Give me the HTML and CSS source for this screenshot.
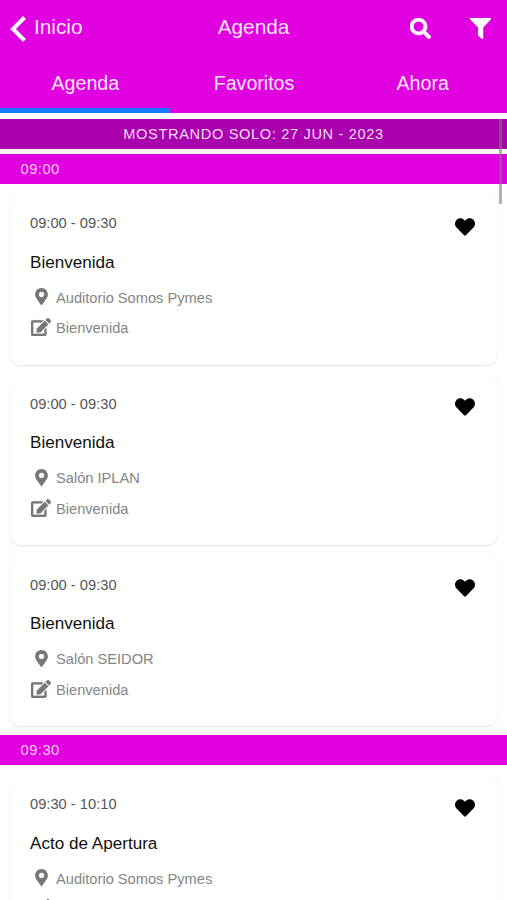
FILE: index.html
```
<!DOCTYPE html>
<html lang="es">
<head>
    <meta charset="UTF-8">
    <meta name="viewport" content="width=device-width, initial-scale=1.0">
    <title>Agenda</title>
    <link rel="stylesheet" href="styles.css">
</head>
<body>
    <!-- Icons -->
    <svg class="sprite" aria-hidden="true">
        <symbol id="heart" viewBox="0 0 512 512"><path d="M462.3 62.6C407.5 15.9 326 24.3 275.7 76.2L256 96.5l-19.7-20.3C186.1 24.3 104.5 15.9 49.7 62.6c-62.8 53.6-66.1 149.8-9.9 207.9l193.5 199.8c12.5 12.9 32.8 12.9 45.3 0l193.5-199.8c56.3-58.1 53-154.3-9.8-207.9z"/></symbol>
        <symbol id="pin" viewBox="0 0 384 512"><path d="M172.268 501.67C26.97 291.031 0 269.413 0 192 0 85.961 85.961 0 192 0s192 85.961 192 192c0 77.413-26.97 99.031-172.268 309.67-9.535 13.774-29.93 13.773-39.464 0zM192 272c44.183 0 80-35.817 80-80s-35.817-80-80-80-80 35.817-80 80 35.817 80 80 80z"/></symbol>
        <symbol id="edit" viewBox="0 0 576 512"><path d="M402.6 83.2l90.2 90.2c3.8 3.8 3.8 10 0 13.8L274.4 405.6l-92.8 10.3c-12.4 1.4-22.9-9.1-21.5-21.5l10.3-92.8L388.8 83.2c3.8-3.8 10-3.8 13.8 0zm162-22.9l-48.8-48.8c-15.2-15.2-39.9-15.2-55.2 0l-35.4 35.4c-3.8 3.8-3.8 10 0 13.8l90.2 90.2c3.8 3.8 10 3.8 13.8 0l35.4-35.4c15.2-15.3 15.2-40 0-55.2zM384 346.2V448H64V128h229.8c3.2 0 6.2-1.3 8.5-3.5l40-40c7.6-7.6 2.2-20.5-8.5-20.5H48C21.5 64 0 85.5 0 112v352c0 26.5 21.5 48 48 48h352c26.5 0 48-21.5 48-48V306.2c0-10.7-12.9-16-20.5-8.5l-40 40c-2.2 2.3-3.5 5.3-3.5 8.5z"/></symbol>
    </svg>

    <header class="header">
        <div class="toolbar">
            <a class="back">
                <svg class="back-icon" viewBox="0 0 16 26"><path d="M14.5 1.5L3 13l11.500 11.500"/></svg>
                <span>Inicio</span>
            </a>
            <h1 class="title">Agenda</h1>
            <div class="actions">
                <svg class="action-icon search" viewBox="0 0 512 512"><path d="M505 442.7L405.3 343c-4.5-4.5-10.6-7-17-7H372c27.6-35.3 44-79.7 44-128C416 93.1 322.9 0 208 0S0 93.1 0 208s93.1 208 208 208c48.3 0 92.7-16.4 128-44v16.3c0 6.4 2.5 12.5 7 17l99.7 99.7c9.4 9.4 24.6 9.400 33.9 0l28.3-28.3c9.4-9.4 9.4-24.6.1-34zM208 336c-70.7 0-128-57.2-128-128 0-70.7 57.2-128 128-128 70.7 0 128 57.2 128 128 0 70.7-57.2 128-128 128z"/></svg>
                <svg class="action-icon" viewBox="0 0 512 512"><path d="M0 0h512v28L322 232v280h-30l-96-84V232L0 28z"/></svg>
            </div>
        </div>
        <nav class="tabs">
            <a class="tab active">Agenda</a>
            <a class="tab">Favoritos</a>
            <a class="tab">Ahora</a>
        </nav>
    </header>

    <main class="content">
        <div class="filter-bar">MOSTRANDO SOLO: 27 JUN - 2023</div>

        <h2 class="hour">09:00</h2>
        <section class="card">
            <svg class="heart"><use href="#heart"/></svg>
            <p class="time">09:00 - 09:30</p>
            <h3 class="name">Bienvenida</h3>
            <p class="info"><svg class="pin"><use href="#pin"/></svg>Auditorio Somos Pymes</p>
            <p class="info"><svg class="edit"><use href="#edit"/></svg>Bienvenida</p>
        </section>
        <section class="card">
            <svg class="heart"><use href="#heart"/></svg>
            <p class="time">09:00 - 09:30</p>
            <h3 class="name">Bienvenida</h3>
            <p class="info"><svg class="pin"><use href="#pin"/></svg>Salón IPLAN</p>
            <p class="info"><svg class="edit"><use href="#edit"/></svg>Bienvenida</p>
        </section>
        <section class="card">
            <svg class="heart"><use href="#heart"/></svg>
            <p class="time">09:00 - 09:30</p>
            <h3 class="name">Bienvenida</h3>
            <p class="info"><svg class="pin"><use href="#pin"/></svg>Salón SEIDOR</p>
            <p class="info"><svg class="edit"><use href="#edit"/></svg>Bienvenida</p>
        </section>

        <h2 class="hour">09:30</h2>
        <section class="card">
            <svg class="heart"><use href="#heart"/></svg>
            <p class="time">09:30 - 10:10</p>
            <h3 class="name">Acto de Apertura</h3>
            <p class="info"><svg class="pin"><use href="#pin"/></svg>Auditorio Somos Pymes</p>
            <p class="info"><svg class="edit"><use href="#edit"/></svg></p>
        </section>
        <div class="scrollbar"></div>
    </main>
</body>
</html>
```
FILE: styles.css
```
* {
    box-sizing: border-box;
}

body {
    font-family: "Liberation Sans", Arial, sans-serif;
    margin: 0;
    height: 900px;
    overflow: hidden;
    display: flex;
    flex-direction: column;
    background: #fff;
}

h1, h2, h3, p {
    margin: 0;
    font-weight: normal;
}

svg {
    fill: currentColor;
    flex: none;
}

.sprite {
    position: absolute;
    width: 0;
    height: 0;
}

.header {
    background: #e000e0;
    color: #ffe6ff;
    height: 113px;
    flex: none;
}

.toolbar {
    display: grid;
    grid-template-columns: 1fr auto 1fr;
    align-items: center;
    height: 54px;
    padding: 0 16px 0 10px;
    font-size: 20.8px;
}

.back {
    display: flex;
    align-items: center;
    gap: 8px;
}

.back-icon {
    width: 16px;
    height: 26px;
    margin-top: 3px;
    fill: none;
    stroke: #fff;
    stroke-width: 4;
}

.title {
    font-size: 20.8px;
    padding-left: 6px;
}

.actions {
    display: flex;
    justify-content: flex-end;
    gap: 39px;
    padding-top: 3px;
    color: #fff;
}

.action-icon {
    width: 21px;
    height: 21px;
}

.search {
    stroke: #fff;
    stroke-width: 14;
}

.tabs {
    display: flex;
    height: 59px;
}

.tab {
    flex: 1;
    text-align: center;
    font-size: 19.6px;
    line-height: 59px;
    border-bottom: 5px solid transparent;
}

.tab.active {
    padding-left: 1px;
    border-bottom-color: #147aff;
}

.content {
    position: relative;
    flex: 1;
    min-height: 0;
    overflow: hidden;
    padding-top: 6.4px;
}

.filter-bar {
    height: 29.4px;
    line-height: 30.4px;
    margin-bottom: 5.6px;
    background: #a900ad;
    color: #f6dcf6;
    font-size: 14.6px;
    letter-spacing: 0.65px;
    text-align: center;
}

.hour {
    height: 29.4px;
    line-height: 30.4px;
    padding-left: 20.5px;
    background: #e000e0;
    color: #fbd0fb;
    font-size: 14.7px;
    letter-spacing: 0.5px;
}

.card {
    position: relative;
    height: 170.8px;
    margin: 10px 10px 9.2px;
    padding: 20.2px 20px 19px;
    border-radius: 10px;
    box-shadow: 0 1px 2px rgba(0, 0, 0, 0.12);
}

.time {
    font-size: 14.7px;
    line-height: 18px;
    color: #555;
}

.name {
    font-size: 17.1px;
    line-height: 20px;
    margin: 20.6px 0 9.8px;
    color: #111;
}

.info {
    display: flex;
    align-items: center;
    height: 30.5px;
    font-size: 14.65px;
    color: #858585;
}

.info svg {
    color: #777;
}

.pin {
    width: 13px;
    height: 17px;
    margin: 0 8px 2px 5px;
}

.edit {
    width: 20px;
    height: 18px;
    margin: 0 5px 2px 1px;
    stroke: #777;
    stroke-width: 6;
}

.heart {
    position: absolute;
    top: 22.8px;
    right: 22px;
    width: 20px;
    height: 20px;
    color: #000;
}

.scrollbar {
    position: absolute;
    top: 6px;
    right: 5px;
    width: 3px;
    height: 85px;
    background: rgba(125, 125, 125, 0.6);
}
```
